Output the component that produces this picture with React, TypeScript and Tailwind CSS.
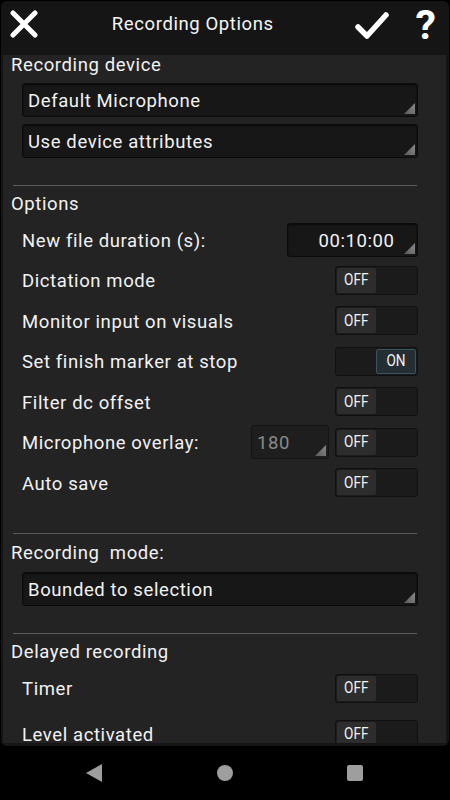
import React from 'react';

const font = { fontFamily: 'Roboto, "Noto Sans", sans-serif' };

const Corner: React.FC = () => (
  <svg className="absolute right-[2px] bottom-[2px]" width="11" height="11" viewBox="0 0 11 11">
    <defs>
      <linearGradient id="cg" x1="0" y1="1" x2="1" y2="0">
        <stop offset="0" stopColor="#5a5a5a" />
        <stop offset="1" stopColor="#8a8a8a" />
      </linearGradient>
    </defs>
    <polygon points="11,0 11,11 0,11" fill="url(#cg)" />
  </svg>
);

const Select: React.FC<{ label: string }> = ({ label }) => (
  <div className="relative ml-[19px] mr-[28px] h-[34px] rounded-[3px] border border-[#0b0b0b] bg-[#171717] shadow-[inset_0_1px_2px_rgba(0,0,0,0.6)] flex items-center pl-[5px] pt-[4px] text-[18.5px] text-[#f2f2f2]">
    {label}
    <Corner />
  </div>
);

const Toggle: React.FC<{ on?: boolean }> = ({ on }) => (
  <div className="w-[83px] h-[29px] rounded-[3px] border border-[#101010] bg-[#1b1b1b] flex p-[1px] tracking-normal">
    {on ? (
      <>
        <div className="flex-1" />
        <div className="w-[40px] rounded-[2px] border border-[#3b5260] bg-[#252e33] flex items-center justify-center text-[17px] text-[#f2f2f2]">
          <span className="inline-block scale-x-80">ON</span>
        </div>
      </>
    ) : (
      <div className="w-[39px] rounded-[2px] bg-[#2d2d2d] flex items-center justify-center text-[17px] text-[#f2f2f2]">
        <span className="inline-block scale-x-80">OFF</span>
      </div>
    )}
  </div>
);

const Divider: React.FC<{ className: string }> = ({ className }) => (
  <div className={`ml-[10px] mr-[29px] h-px bg-[#5c5c5c] ${className}`} />
);

const Title: React.FC<{ text: string; className: string }> = ({ text, className }) => (
  <div className={`pl-[8px] leading-[20px] text-[18.5px] text-[#f2f2f2] whitespace-pre ${className}`}>
    {text}
  </div>
);

const Row: React.FC<{ label: string; tall?: boolean; children: React.ReactNode }> = ({
  label,
  tall,
  children
}) => (
  <div
    className={`${tall ? 'h-[41px]' : 'h-[40px]'} flex items-center pl-[19px] pr-[28px] text-[18.5px] text-[#f2f2f2]`}
  >
    <span className="flex-1 pt-[4px]">{label}</span>
    {children}
  </div>
);

export default function App() {
  return (
    <div className="w-[450px] h-[800px] bg-black flex flex-col tracking-[0.6px]" style={font}>
      <div className="mx-[1px] mt-[1px] h-[745px] rounded-[6px] bg-[#151515] flex flex-col overflow-hidden">
        {/* header */}
        <div className="h-[54px] shrink-0 flex items-center pb-[8px]">
          <svg className="ml-[9px] -mt-[1px]" width="28" height="28" viewBox="0 0 28 28">
            <path d="M3 3 L25 25 M25 3 L3 25" stroke="#fff" strokeWidth="5" strokeLinecap="round" />
          </svg>
          <div className="flex-1 mr-[5px] pt-[2px] text-center text-[18.5px] text-[#f5f5f5]">Recording Options</div>
          <svg className="mt-[4px] ml-[2px]" width="34" height="31" viewBox="0 0 34 31">
            <path d="M3 16 L12 25 L31 4" stroke="#fff" strokeWidth="5.5" fill="none" strokeLinecap="round" strokeLinejoin="round" />
          </svg>
          <div className="ml-[27px] mr-[13px] pt-[2px] text-[41px] font-bold leading-[46px] text-white tracking-normal">?</div>
        </div>

        {/* panel */}
        <div className="flex-1 ml-[2px] mr-[3px] mb-[3px] bg-[#232323] overflow-hidden">
          <Title text="Recording device" className="" />
          <div className="mt-[8px]">
            <Select label="Default Microphone" />
          </div>
          <div className="mt-[7px]">
            <Select label="Use device attributes" />
          </div>
          <Divider className="mt-[27px]" />
          <Title text="Options" className="mt-[8px]" />
          <div className="mt-[6px]">
            <Row label="New file duration (s):">
              <div className="relative w-[131px] h-[34px] rounded-[3px] border border-[#0b0b0b] bg-[#171717] shadow-[inset_0_1px_2px_rgba(0,0,0,0.6)] flex items-center justify-center pl-[8px] pt-[4px] text-[18.5px] text-[#f2f2f2]">
                00:10:00
                <Corner />
              </div>
            </Row>
            <Row label="Dictation mode">
              <Toggle />
            </Row>
            <Row label="Monitor input on visuals" tall>
              <Toggle />
            </Row>
            <Row label="Set finish marker at stop">
              <Toggle on />
            </Row>
            <Row label="Filter dc offset" tall>
              <Toggle />
            </Row>
            <Row label="Microphone overlay:">
              <div className="relative mr-[6px] w-[78px] h-[34px] rounded-[3px] border border-[#141414] bg-[#1e1e1e] flex items-center pl-[5px] pt-[4px] text-[18.5px] text-[#8a8a8a]">
                180
                <Corner />
              </div>
              <Toggle />
            </Row>
            <Row label="Auto save" tall>
              <Toggle />
            </Row>
          </div>
          <Divider className="mt-[30px]" />
          <Title text={'Recording  mode:'} className="mt-[9px]" />
          <div className="mt-[9px]">
            <Select label="Bounded to selection" />
          </div>
          <Divider className="mt-[27px]" />
          <Title text="Delayed recording" className="mt-[8px]" />
          <div className="mt-[6px]">
            <Row label="Timer">
              <Toggle />
            </Row>
            <div className="mt-[6px]">
              <Row label="Level activated">
                <Toggle />
              </Row>
            </div>
          </div>
        </div>
      </div>

      {/* nav bar */}
      <div className="flex-1 flex items-center">
        <svg className="ml-[86px]" width="16" height="18" viewBox="0 0 16 18">
          <polygon points="16,0 16,18 0,9" fill="#9e9e9e" />
        </svg>
        <div className="ml-[115px] w-[16px] h-[16px] rounded-full bg-[#9e9e9e]" />
        <div className="ml-[114px] w-[16px] h-[16px] rounded-[2px] bg-[#9e9e9e]" />
      </div>
    </div>
  );
}
